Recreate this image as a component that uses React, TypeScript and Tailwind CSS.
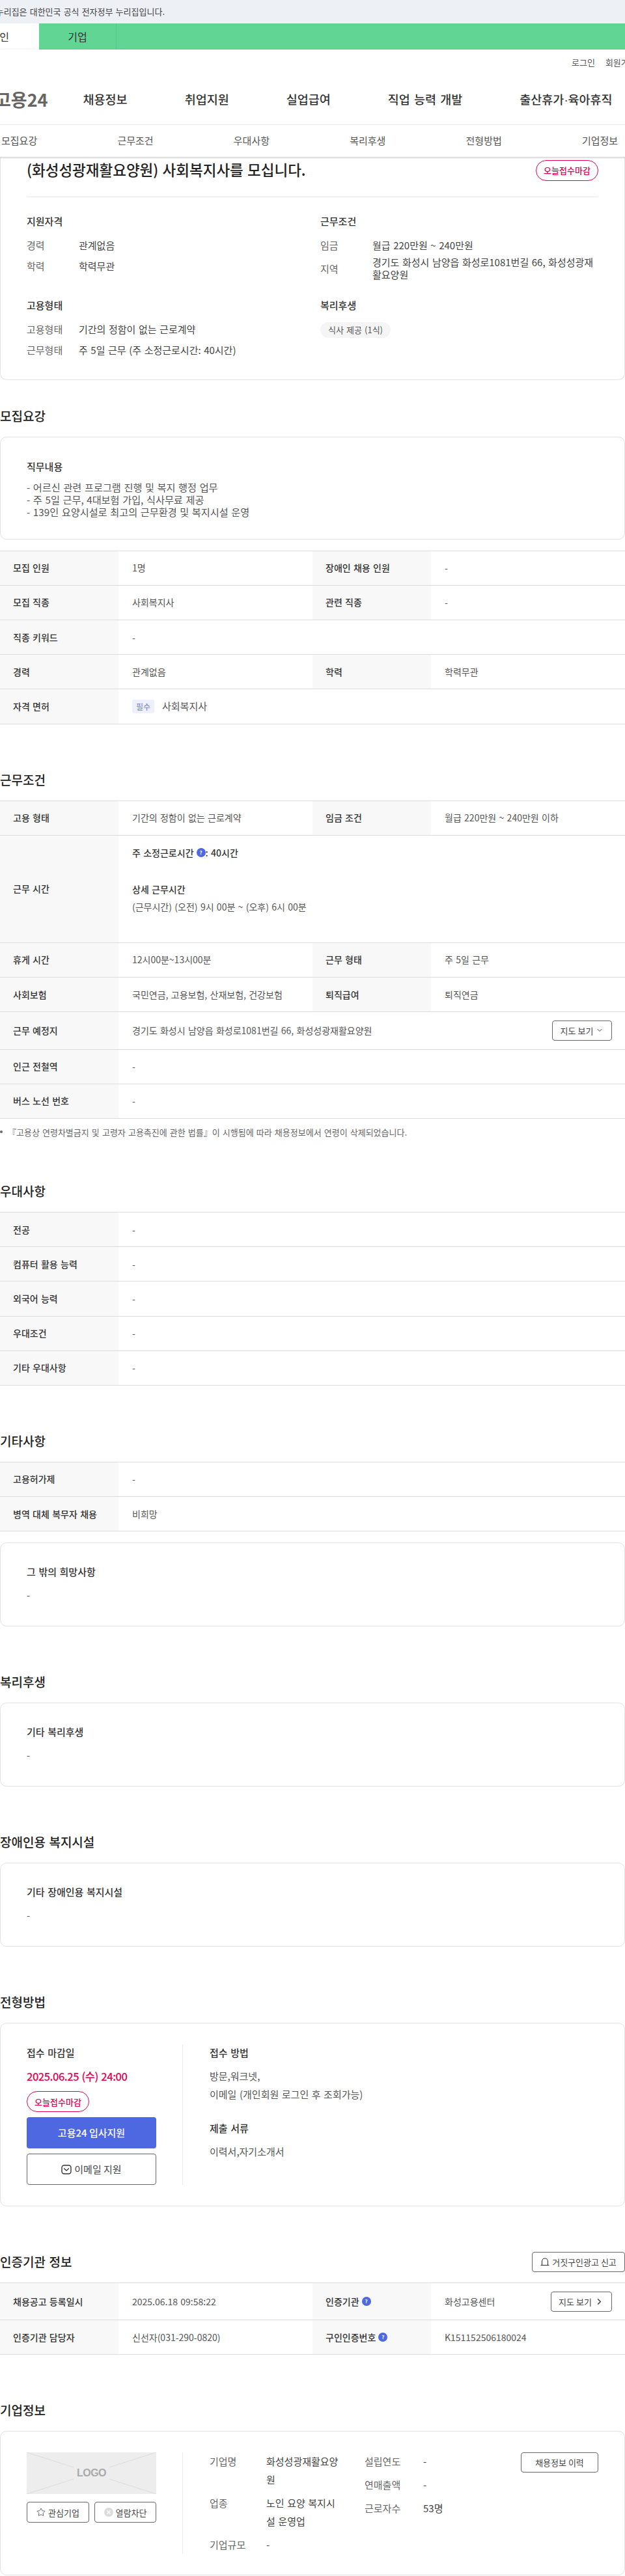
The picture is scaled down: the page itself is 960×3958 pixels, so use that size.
import type { ReactNode } from "react";
import { ChevronDown, ChevronRight, Star } from "lucide-react";

type Cell = {
  label: ReactNode;
  value: ReactNode;
};

type RowProps = {
  cells: Cell[];
  height?: string;
};

const NAV = ["채용정보", "취업지원", "실업급여", "직업 능력 개발", "출산휴가·육아휴직"];
const TABS = ["모집요강", "근무조건", "우대사항", "복리후생", "전형방법", "기업정보"];

const Help = () => (
  <span className="inline-flex h-[14px] w-[14px] items-center justify-center rounded-full bg-[#4d68e1] text-[8px] font-bold leading-none text-white">
    ?
  </span>
);

const DeadlineBadge = () => (
  <span className="flex h-[32px] w-[96px] items-center justify-center rounded-[20px] border border-[#e6004f] bg-white text-[13px] font-medium text-[#e6004f]">
    오늘접수마감
  </span>
);

const OutlineButton = ({ className, children }: { className: string; children: ReactNode }) => (
  <button className={`flex items-center justify-center rounded-[4px] border border-[#666] bg-white text-[13px] text-[#444] ${className}`}>
    {children}
  </button>
);

const TableRow = ({ cells, height = "h-[53.2px]" }: RowProps) => (
  <div className={`flex border-b border-[#ddd] ${height}`}>
    {cells.map((cell, i) => (
      <div key={i} className={`flex min-w-0 ${cells.length === 1 ? "flex-1" : "w-1/2"}`}>
        <div className="flex w-[182px] shrink-0 items-center gap-1 bg-[#f8f8f8] pl-5 text-[14px] font-medium text-[#333]">
          {cell.label}
        </div>
        <div className="flex min-w-0 flex-1 items-center px-[21px] text-[14px] text-[#555]">{cell.value}</div>
      </div>
    ))}
  </div>
);

const Table = ({ children }: { children: ReactNode }) => <div className="border-t border-[#ddd]">{children}</div>;

const Card = ({ className = "", children }: { className?: string; children: ReactNode }) => (
  <div className={`rounded-[10px] border border-[#e2e2e2] bg-white ${className}`}>{children}</div>
);

const Section = ({
  title,
  mt = "mt-[70px]",
  action,
  children,
}: {
  title: string;
  mt?: string;
  action?: ReactNode;
  children: ReactNode;
}) => (
  <section className={mt}>
    <div className="mb-[17px] flex h-[30px] items-center justify-between">
      <h2 className="text-[19px] font-medium leading-[30px] text-[#222]">{title}</h2>
      {action}
    </div>
    {children}
  </section>
);

const TextCard = ({ title, children }: { title: string; children: ReactNode }) => (
  <Card className="px-10 pb-[38px] pt-[32px]">
    <h3 className="h-6 text-[15px] font-medium leading-6 text-[#333]">{title}</h3>
    <div className="mt-[14px] text-[15px] leading-[19px] text-[#555]">{children}</div>
  </Card>
);

const Fact = ({ label, children }: { label: string; children: ReactNode }) => (
  <div className="flex items-center text-[15px] leading-[19px]">
    <span className="w-[80px] shrink-0 text-[#666]">{label}</span>
    <span className="text-[#444]">{children}</span>
  </div>
);

const Summary = () => (
  <div className="rounded-b-[10px] border border-t-0 border-[#e2e2e2] px-10 pb-[36px] pt-[5px]">
    <div className="flex h-[32px] items-center justify-between">
      <h1 className="-mt-[2px] text-[22.5px] font-medium text-[#222]">(화성성광재활요양원) 사회복지사를 모십니다.</h1>
      <DeadlineBadge />
    </div>
    <div className="mt-[24px] border-t border-[#e8e8e8]" />
    <div className="mt-[25px] grid grid-cols-[451px_1fr] gap-y-[26px]">
      <div>
        <h3 className="mb-[15px] h-6 text-[15px] font-medium leading-6 text-[#333]">지원자격</h3>
        <div className="flex flex-col gap-[12.5px]">
          <Fact label="경력">관계없음</Fact>
          <Fact label="학력">학력무관</Fact>
        </div>
      </div>
      <div>
        <h3 className="mb-[15px] h-6 text-[15px] font-medium leading-6 text-[#333]">근무조건</h3>
        <div className="flex flex-col gap-[8px]">
          <Fact label="임금">월급 220만원 ~ 240만원</Fact>
          <Fact label="지역">
            <span className="block leading-[18.6px]">경기도 화성시 남양읍 화성로1081번길 66, 화성성광재활요양원</span>
          </Fact>
        </div>
      </div>
      <div>
        <h3 className="mb-[15px] h-6 text-[15px] font-medium leading-6 text-[#333]">고용형태</h3>
        <div className="flex flex-col gap-[12.5px]">
          <Fact label="고용형태">기간의 정함이 없는 근로계약</Fact>
          <Fact label="근무형태">주 5일 근무 (주 소정근로시간: 40시간)</Fact>
        </div>
      </div>
      <div>
        <h3 className="mb-[12px] h-6 text-[15px] font-medium leading-6 text-[#333]">복리후생</h3>
        <span className="inline-flex h-[24px] w-[108px] items-center justify-center rounded-full bg-[#f5f5f5] text-[13px] text-[#555]">
          식사 제공 (1식)
        </span>
      </div>
    </div>
  </div>
);

const WorkHours = () => (
  <div className="flex h-full flex-col justify-start pt-[17px] text-[14px] leading-[19px]">
    <div className="flex items-center gap-1 font-medium text-[#333]">
      주 소정근로시간 <span className="-mr-1 flex items-center"><Help /></span>: 40시간
    </div>
    <div className="mt-[37px] font-medium text-[#333]">상세 근무시간</div>
    <div className="mt-[8.6px]">(근무시간) (오전) 9시 00분 ~ (오후) 6시 00분</div>
  </div>
);

const MailIcon = () => (
  <svg width="16" height="15" viewBox="0 0 16 15" fill="none" stroke="#333" strokeWidth="1.4">
    <rect x="1" y="1" width="14" height="13" rx="3.5" />
    <path d="M4.5 6 L8 9 L11.5 6" strokeLinecap="round" strokeLinejoin="round" />
  </svg>
);

const BellIcon = () => (
  <svg width="14" height="14" viewBox="0 0 14 14" fill="none" stroke="#333" strokeWidth="1.1">
    <path d="M2.5 12.5 V6.5 A4.5 4.5 0 0 1 11.5 6.5 V12.5" />
    <path d="M0.5 12.5 H13.5" />
  </svg>
);

const BlockIcon = () => (
  <svg width="14" height="14" viewBox="0 0 14 14" fill="none">
    <circle cx="7" cy="7" r="7" fill="#dcdcdc" />
    <path d="M4.6 4.6 L9.4 9.4 M9.4 4.6 L4.6 9.4" stroke="#fff" strokeWidth="1.4" />
  </svg>
);

const LogoPlaceholder = () => (
  <div className="relative flex h-[64px] w-[199px] items-center justify-center bg-[#ededed]">
    <svg className="absolute inset-0" width="199" height="64" viewBox="0 0 199 64" stroke="#dcdcdc" strokeWidth="1">
      <path d="M0 0 L72 23 M199 0 L127 23 M0 64 L72 41 M199 64 L127 41" />
    </svg>
    <span className="relative font-['Liberation_Sans',sans-serif] text-[16px] font-bold tracking-[-0.5px] text-[#aaa]">LOGO</span>
  </div>
);

const CompanyRow = ({ label, width, children }: { label: string; width: string; children: ReactNode }) => (
  <div className="flex text-[15px] leading-[28px]">
    <span className={`shrink-0 text-[#666] ${width}`}>{label}</span>
    {children}
  </div>
);

export default function App() {
  return (
    <div className="w-[960px] overflow-hidden bg-white font-['Noto_Sans_CJK_KR','Noto_Sans',sans-serif] [word-spacing:1.2px]">
      <div className="h-9 bg-[#edf0f5]">
        <div className="flex h-full w-[253px] items-center justify-end whitespace-nowrap text-[13px] text-[#444]">
          <span>이 누리집은 대한민국 공식 전자정부 누리집입니다.</span>
        </div>
      </div>
      <div className="flex h-10 bg-[#61d594] text-[16px] text-[#333]">
        <div className="flex w-[60px] items-center justify-end whitespace-nowrap bg-white pr-[46px]">개인</div>
        <div className="flex w-[119px] items-center justify-center border-r border-[#57c788]">기업</div>
      </div>

      <header className="relative z-10 bg-white shadow-[0_1px_3px_rgba(0,0,0,0.25)]">
        <div className="flex h-10 items-center gap-4 whitespace-nowrap pl-[878px] text-[13px] text-[#555]">
          <span>로그인</span>
          <span>회원가입</span>
        </div>
        <div className="flex h-[76px] items-center whitespace-nowrap border-b border-[#e8e8e8]">
          <span className="-ml-[8px] mr-[54px] text-[27px] font-bold text-[#666]">고용24</span>
          <nav className="flex gap-[88px] text-[18.5px] font-medium text-[#333] [word-spacing:2px]">
            {NAV.map((item) => {
              const [first, second] = item.split("·");
              return (
                <span key={item}>
                  {first}
                  {second && (
                    <>
                      <span className="font-['Liberation_Sans',sans-serif]">·</span>
                      {second}
                    </>
                  )}
                </span>
              );
            })}
          </nav>
        </div>
        <div className="flex h-[49px] items-center gap-[123.2px] whitespace-nowrap pl-[2px] text-[15px] text-[#555]">
          {TABS.map((tab) => (
            <span key={tab}>{tab}</span>
          ))}
        </div>
      </header>

      <main>
        <Summary />

        <Section title="모집요강" mt="mt-[40px]">
          <Card className="px-10 pb-[32px] pt-[33px]">
            <h3 className="h-6 text-[15px] font-medium leading-6 text-[#333]">직무내용</h3>
            <div className="mt-[10px] text-[15.2px] leading-[19px] text-[#555]">
              <p>- 어르신 관련 프로그램 진행 및 복지 행정 업무</p>
              <p>- 주 5일 근무, 4대보험 가입, 식사무료 제공</p>
              <p>- 139인 요양시설로 최고의 근무환경 및 복지시설 운영</p>
            </div>
          </Card>
          <div className="mt-[17px]">
            <Table>
              <TableRow cells={[{ label: "모집 인원", value: "1명" }, { label: "장애인 채용 인원", value: "-" }]} />
              <TableRow cells={[{ label: "모집 직종", value: "사회복지사" }, { label: "관련 직종", value: "-" }]} />
              <TableRow cells={[{ label: "직종 키워드", value: "-" }]} />
              <TableRow cells={[{ label: "경력", value: "관계없음" }, { label: "학력", value: "학력무관" }]} />
              <TableRow
                cells={[
                  {
                    label: "자격 면허",
                    value: (
                      <span className="flex items-center gap-3 text-[15px]">
                        <span className="flex h-[21px] w-[34px] items-center justify-center rounded-[3px] bg-[#eef0fd] text-[12px] text-[#6a80e8]">필수</span>
                        사회복지사
                      </span>
                    ),
                  },
                ]}
              />
            </Table>
          </div>
        </Section>

        <Section title="근무조건">
          <Table>
            <TableRow cells={[{ label: "고용 형태", value: "기간의 정함이 없는 근로계약" }, { label: "임금 조건", value: "월급 220만원 ~ 240만원 이하" }]} />
            <div className="flex h-[165px] border-b border-[#ddd]">
              <div className="flex w-[182px] shrink-0 items-center bg-[#f8f8f8] pl-5 text-[14px] font-medium text-[#333]">근무 시간</div>
              <div className="flex-1 px-[21px] text-[#555]">
                <WorkHours />
              </div>
            </div>
            <TableRow cells={[{ label: "휴게 시간", value: "12시00분~13시00분" }, { label: "근무 형태", value: "주 5일 근무" }]} />
            <TableRow cells={[{ label: "사회보험", value: "국민연금, 고용보험, 산재보험, 건강보험" }, { label: "퇴직급여", value: "퇴직연금" }]} />
            <TableRow
              height="h-[57.4px]"
              cells={[
                {
                  label: "근무 예정지",
                  value: (
                    <span className="flex w-full items-center justify-between">
                      경기도 화성시 남양읍 화성로1081번길 66, 화성성광재활요양원
                      <OutlineButton className="-mr-px h-[31px] w-[92px] gap-1">
                        지도 보기 <ChevronDown size={12} />
                      </OutlineButton>
                    </span>
                  ),
                },
              ]}
            />
            <TableRow cells={[{ label: "인근 전철역", value: "-" }]} />
            <TableRow cells={[{ label: "버스 노선 번호", value: "-" }]} />
          </Table>
          <p className="mt-[11px] flex items-center text-[13px] leading-[19px] text-[#666]">
            <span className="mr-2 h-1 w-1 rounded-full bg-[#666]" />
            『고용상 연령차별금지 및 고령자 고용촉진에 관한 법률』이 시행됨에 따라 채용정보에서 연령이 삭제되었습니다.
          </p>
        </Section>

        <Section title="우대사항" mt="mt-[66px]">
          <Table>
            <TableRow cells={[{ label: "전공", value: "-" }]} />
            <TableRow cells={[{ label: "컴퓨터 활용 능력", value: "-" }]} />
            <TableRow cells={[{ label: "외국어 능력", value: "-" }]} />
            <TableRow cells={[{ label: "우대조건", value: "-" }]} />
            <TableRow cells={[{ label: "기타 우대사항", value: "-" }]} />
          </Table>
        </Section>

        <Section title="기타사항">
          <Table>
            <TableRow cells={[{ label: "고용허가제", value: "-" }]} />
            <TableRow cells={[{ label: "병역 대체 복무자 채용", value: "비희망" }]} />
          </Table>
          <div className="mt-[17px]">
            <TextCard title="그 밖의 희망사항">-</TextCard>
          </div>
        </Section>

        <Section title="복리후생">
          <TextCard title="기타 복리후생">-</TextCard>
        </Section>

        <Section title="장애인용 복지시설">
          <TextCard title="기타 장애인용 복지시설">-</TextCard>
        </Section>

        <Section title="전형방법">
          <Card className="flex px-10 py-[32px]">
            <div className="w-[199px] shrink-0 pt-[1px]">
              <h3 className="h-6 text-[15px] font-medium leading-6 text-[#333]">접수 마감일</h3>
              <p className="mt-[12px] text-[16.5px] font-medium leading-6 tracking-[-0.5px] text-[#e6004f]">2025.06.25 (수) 24:00</p>
              <div className="mt-[11px]">
                <DeadlineBadge />
              </div>
              <button className="mt-[8px] h-[48px] w-full rounded-[4px] bg-[#4d68e1] text-[15px] font-medium text-white">고용24 입사지원</button>
              <OutlineButton className="mt-[8px] h-[48px] w-full gap-1 !text-[15px]">
                <MailIcon /> 이메일 지원
              </OutlineButton>
            </div>
            <div className="ml-10 flex-1 border-l border-[#e8e8e8] pl-[41px] pt-[1px]">
              <h3 className="h-6 text-[15px] font-medium leading-6 text-[#333]">접수 방법</h3>
              <div className="mt-[10px] text-[15px] leading-[28px] text-[#555]">
                <p>방문,워크넷,</p>
                <p>이메일 (개인회원 로그인 후 조회가능)</p>
              </div>
              <h3 className="mt-[26px] h-6 text-[15px] font-medium leading-6 text-[#333]">제출 서류</h3>
              <p className="mt-[10px] text-[15px] leading-[28px] text-[#555]">이력서,자기소개서</p>
            </div>
          </Card>
        </Section>

        <Section
          title="인증기관 정보"
          mt="mt-[70px]"
          action={
            <OutlineButton className="h-[31px] w-[143px] gap-1">
              <BellIcon /> 거짓구인광고 신고
            </OutlineButton>
          }
        >
          <Table>
            <TableRow
              height="h-[57px]"
              cells={[
                { label: "채용공고 등록일시", value: "2025.06.18 09:58:22" },
                {
                  label: (
                    <>
                      인증기관 <Help />
                    </>
                  ),
                  value: (
                    <span className="flex w-full items-center justify-between">
                      화성고용센터
                      <OutlineButton className="-mr-px h-[31px] w-[94px] gap-1">
                        지도 보기 <ChevronRight size={15} strokeWidth={2.5} />
                      </OutlineButton>
                    </span>
                  ),
                },
              ]}
            />
            <TableRow
              cells={[
                { label: "인증기관 담당자", value: "신선자(031-290-0820)" },
                {
                  label: (
                    <>
                      구인인증번호 <Help />
                    </>
                  ),
                  value: "K151152506180024",
                },
              ]}
            />
          </Table>
        </Section>

        <Section title="기업정보">
          <Card className="flex px-10 py-[32px]">
            <div className="w-[199px] shrink-0">
              <LogoPlaceholder />
              <div className="mt-[12px] flex gap-2">
                <OutlineButton className="h-[32px] w-[96px] gap-1 whitespace-nowrap">
                  <Star size={14} strokeWidth={1.4} /> 관심기업
                </OutlineButton>
                <OutlineButton className="h-[32px] w-[95px] gap-1 whitespace-nowrap">
                  <BlockIcon /> 열람차단
                </OutlineButton>
              </div>
            </div>
            <div className="ml-10 flex h-[156px] flex-1 border-l border-[#e8e8e8] pl-[41px]">
              <div className="flex w-[201px] shrink-0 flex-col gap-2">
                <CompanyRow label="기업명" width="w-[87px]">
                  <span className="break-all text-[#444]">화성성광재활요양원</span>
                </CompanyRow>
                <CompanyRow label="업종" width="w-[87px]">
                  <span className="break-all text-[#444]">노인 요양 복지시설 운영업</span>
                </CompanyRow>
                <CompanyRow label="기업규모" width="w-[87px]">
                  <span className="text-[#444]">-</span>
                </CompanyRow>
              </div>
              <div className="ml-[37px] flex flex-col gap-2">
                <CompanyRow label="설립연도" width="w-[90px]">
                  <span className="text-[#444]">-</span>
                </CompanyRow>
                <CompanyRow label="연매출액" width="w-[90px]">
                  <span className="text-[#444]">-</span>
                </CompanyRow>
                <CompanyRow label="근로자수" width="w-[90px]">
                  <span className="text-[#444]">53명</span>
                </CompanyRow>
              </div>
              <div className="ml-auto">
                <OutlineButton className="h-[31px] w-[119px]">채용정보 이력</OutlineButton>
              </div>
            </div>
          </Card>
        </Section>
      </main>
      <div className="h-px" />
    </div>
  );
}
